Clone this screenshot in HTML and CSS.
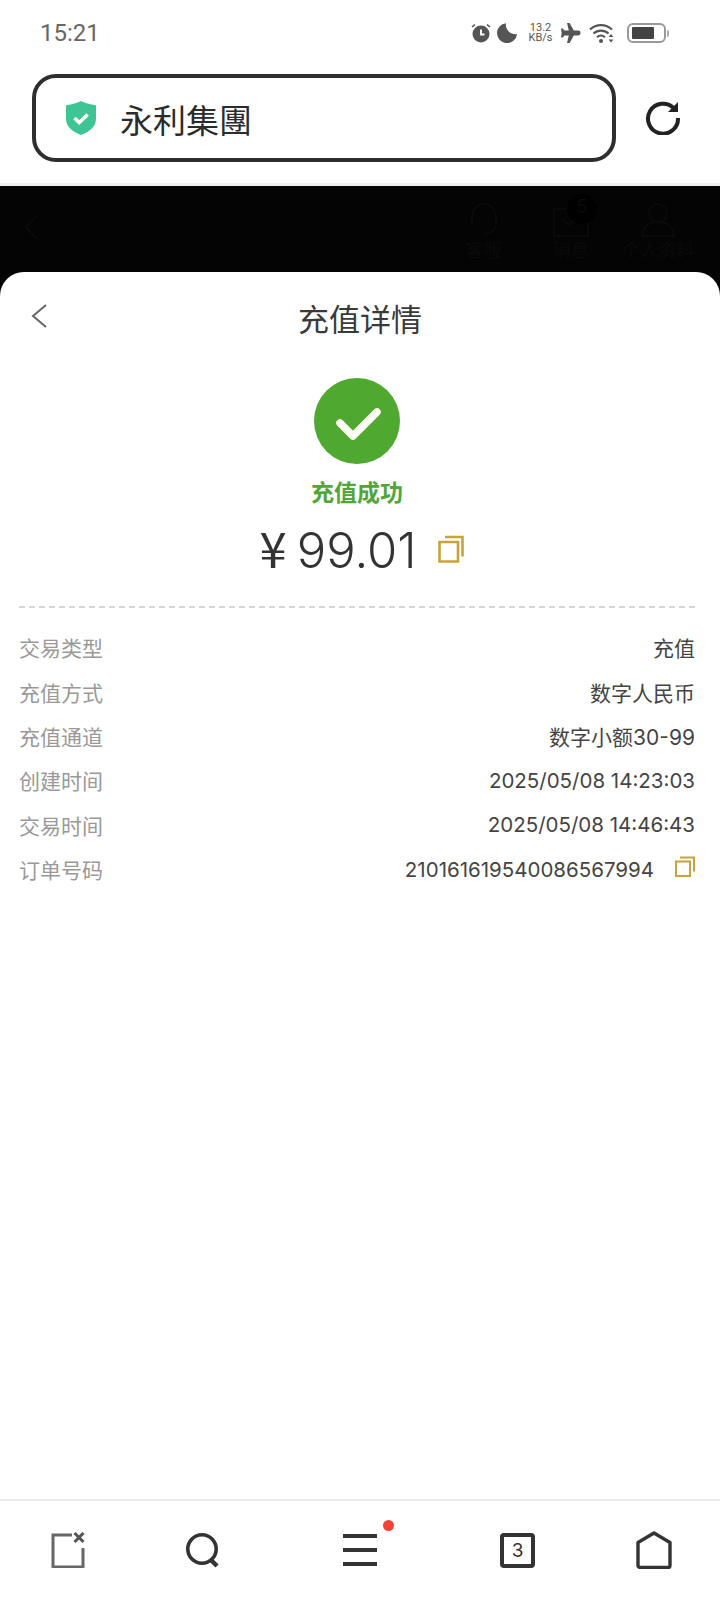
FILE: index.html

```html
<!DOCTYPE html>
<html lang="zh-CN">
<head>
  <meta charset="UTF-8" />
  <meta name="viewport" content="width=device-width, initial-scale=1.0" />
  <title>充值详情</title>
  <link rel="stylesheet" href="styles.css">
</head>
<body>
  <div class="page">
    <div class="status-bar">
      <span class="clock">15:21</span>
      <div class="status-icons">
        <svg class="ic-alarm" width="20" height="20" viewBox="0 0 20 20">
          <circle cx="10" cy="11" r="8.5" fill="#555"/>
          <path d="M10 6.500v5h3.500" fill="none" stroke="#fff" stroke-width="2"/>
          <path d="M1 4l3-2.400M19 4l-3-2.400" stroke="#555" stroke-width="1.600"/>
        </svg>
        <svg class="ic-moon" width="21" height="20" viewBox="0 0 21 20">
          <path d="M9 .2A10 10 0 1 0 20 11A9.500 9.500 0 0 1 9 .2z" fill="#555"/>
        </svg>
        <div class="speed"><span>13.2</span><span>KB/s</span></div>
        <svg class="ic-plane" width="20" height="20" viewBox="0 0 20 20">
          <path d="M6 0h2.600l4.200 7.600h4.400a2.400 2.400 0 0 1 0 4.800h-4.400L8.600 20H6l1.800-7.600H3.400L1.800 14.600H0l.7-4.600L0 5.400h1.800l1.600 2.200h4.400z" fill="#555"/>
        </svg>
        <svg class="ic-wifi" width="25" height="20" viewBox="0 0 25 20">
          <path d="M1 6.500a16 16 0 0 1 22 0M4.500 10.500a11 11 0 0 1 15 0M8 14.200a6 6 0 0 1 8 0" fill="none" stroke="#555" stroke-width="2.200"/>
          <circle cx="12" cy="18" r="2" fill="#555"/>
          <path d="M22 11l-2.400 3h4.800zM22 19.500l-2.400-3h4.800z" fill="#555"/>
        </svg>
        <div class="battery">
          <div class="battery-body"><div class="battery-level"></div></div>
          <div class="battery-tip"></div>
        </div>
      </div>
    </div>

    <div class="address-row">
      <div class="address-box">
        <svg width="30" height="34" viewBox="0 0 30 34">
          <path d="M15 0c4 2.200 9 3.300 14 4a1 1 0 0 1 1 1v13c0 8-7 12.800-15 16c-8-3.200-15-8-15-16V5a1 1 0 0 1 1-1c5-.7 10-1.800 14-4z" fill="#3fc495"/>
          <path d="M8.500 17l4.700 4.500l8.500-8" fill="none" stroke="#fff" stroke-width="3.500"/>
        </svg>
        <span class="site-name">永利集團</span>
      </div>
      <svg class="reload" width="36" height="36" viewBox="0 0 36 36">
        <path d="M29 9.500A15 15 0 1 0 33 19" fill="none" stroke="#222" stroke-width="4"/>
        <path d="M33 3v10H23z" fill="#222"/>
      </svg>
    </div>
    <div class="address-line"></div>

    <div class="dark-strip">
      <svg class="ghost-back" width="14" height="26" viewBox="0 0 14 26">
        <path d="M13 1L2 13l11 12" fill="none" stroke="#0a0a0a" stroke-width="2"/>
      </svg>
      <div class="ghost-tabs">
        <div class="ghost-tab">
          <svg width="36" height="36" viewBox="0 0 36 36">
            <path d="M6 22V15a12 13 0 0 1 24 0v7M30 22c0 6-6 10-12 10" fill="none" stroke="#0a0a0a" stroke-width="2"/>
          </svg>
          <span>客服</span>
        </div>
        <div class="ghost-tab ghost-msg">
          <svg width="36" height="36" viewBox="0 0 36 36">
            <path d="M1 7h34v27H1zM9 17l7 6l10-10" fill="none" stroke="#0a0a0a" stroke-width="2"/>
          </svg>
          <span>消息</span>
          <div class="ghost-badge">5</div>
        </div>
        <div class="ghost-tab">
          <svg width="36" height="36" viewBox="0 0 36 36">
            <circle cx="18" cy="11" r="9" fill="none" stroke="#0a0a0a" stroke-width="2"/>
            <path d="M2 34c0-9 7-14 16-14s16 5 16 14z" fill="none" stroke="#0a0a0a" stroke-width="2"/>
          </svg>
          <span>个人资料</span>
        </div>
      </div>
    </div>

    <div class="sheet">
      <div class="sheet-head">
        <svg class="back" width="16" height="24" viewBox="0 0 16 24">
          <path d="M15 1L2 12l13 11" fill="none" stroke="#666" stroke-width="2"/>
        </svg>
        <h2 class="sheet-title">充值详情</h2>
      </div>

      <div class="result">
        <svg width="86" height="86" viewBox="0 0 86 86">
          <circle cx="43" cy="43" r="43" fill="#4fa82f"/>
          <path d="M26 45l13 13l24-24" fill="none" stroke="#fdfdf5" stroke-width="7.500" stroke-linecap="round" stroke-linejoin="round"/>
        </svg>
        <div class="result-text">充值成功</div>
        <div class="amount-row">
          <span class="amount"><span class="amount-sign">¥</span>99.01</span>
          <svg class="copy-big" width="26" height="28" viewBox="0 0 26 28">
            <path d="M1.500 7h18.500v19.500H1.500zM7 2h17.500v19.500" fill="none" stroke="#c9a23c" stroke-width="2.600"/>
          </svg>
        </div>
      </div>

      <div class="divider"></div>

      <div class="rows">
        <div class="row"><span class="row-label">交易类型</span><span class="row-value">充值</span></div>
        <div class="row"><span class="row-label">充值方式</span><span class="row-value">数字人民币</span></div>
        <div class="row"><span class="row-label">充值通道</span><span class="row-value">数字小额30-99</span></div>
        <div class="row"><span class="row-label">创建时间</span><span class="row-value row-num">2025/05/08 14:23:03</span></div>
        <div class="row"><span class="row-label">交易时间</span><span class="row-value row-num">2025/05/08 14:46:43</span></div>
        <div class="row">
          <span class="row-label">订单号码</span>
          <span class="row-value row-num">
            210161619540086567994
            <svg class="copy-small" width="20" height="21" viewBox="0 0 20 21">
              <path d="M1 5.500h14v14.500H1zM5 1.500h14v14" fill="none" stroke="#c9a23c" stroke-width="2"/>
            </svg>
          </span>
        </div>
      </div>
    </div>

    <div class="bottom-bar">
      <svg width="34" height="36" viewBox="0 0 34 36">
        <path d="M21 3H2v32h30V16" fill="none" stroke="#666" stroke-width="3"/>
        <path d="M23.500 1l9 9M32.500 1l-9 9" stroke="#555" stroke-width="3"/>
      </svg>
      <svg width="34" height="36" viewBox="0 0 34 36">
        <circle cx="16" cy="17" r="14.200" fill="none" stroke="#333" stroke-width="3.600"/>
        <path d="M24 27l7 7" stroke="#333" stroke-width="4.500"/>
      </svg>
      <div class="menu">
        <div class="menu-line"></div>
        <div class="menu-line"></div>
        <div class="menu-line"></div>
        <div class="menu-dot"></div>
      </div>
      <div class="tabs-count">3</div>
      <svg width="36" height="38" viewBox="0 0 36 38">
        <path d="M18 2L34 11.500V34.500a2 2 0 0 1-2 2H4a2 2 0 0 1-2-2V11.500z" fill="none" stroke="#333" stroke-width="3.400" stroke-linejoin="round"/>
      </svg>
    </div>
  </div>
</body>
</html>
```

FILE: styles.css

```css
* {
  box-sizing: border-box;
}
body {
  margin: 0;
  background: #fff;
  font-family: Inter, "Noto Sans CJK SC", sans-serif;
}
.page {
  width: 720px;
  height: 1600px;
  display: flex;
  flex-direction: column;
}

/* status bar */
.status-bar {
  height: 66px;
  padding: 0 51px 0 40px;
  display: flex;
  align-items: center;
  justify-content: space-between;
  flex-shrink: 0;
}
.clock {
  font-family: Roboto, sans-serif;
  font-size: 24px;
  color: #666;
}
.status-icons {
  display: flex;
  align-items: center;
}
.ic-moon {
  margin-left: 6px;
}
.speed {
  margin-left: 10px;
  width: 25px;
  display: flex;
  flex-direction: column;
  align-items: center;
  font-family: Roboto, sans-serif;
  font-size: 11px;
  line-height: 10px;
  color: #555;
}
.ic-plane {
  margin-left: 8px;
}
.ic-wifi {
  margin-left: 8px;
}
.battery {
  margin-left: 13px;
  display: flex;
  align-items: center;
}
.battery-body {
  width: 39px;
  height: 20px;
  border: 2px solid #999;
  border-radius: 6px;
  padding: 2px 3px;
}
.battery-level {
  width: 22px;
  height: 100%;
  background: #444;
  border-radius: 1px;
}
.battery-tip {
  width: 2px;
  height: 7px;
  margin-left: 1px;
  background: #aaa;
  border-radius: 0 2px 2px 0;
}

/* address bar */
.address-row {
  height: 117px;
  padding: 8px 0 0 32px;
  display: flex;
  align-items: flex-start;
  flex-shrink: 0;
}
.address-box {
  width: 584px;
  height: 88px;
  border: 4px solid #2e2e2e;
  border-radius: 24px;
  padding-left: 30px;
  display: flex;
  align-items: center;
  gap: 24px;
}
.site-name {
  padding-top: 2px;
  font-size: 33px;
  color: #2b2b2b;
}
.reload {
  margin: 25px 0 0 29px;
}
.address-line {
  height: 3px;
  background: #f1f1f1;
  flex-shrink: 0;
}

/* page behind the sheet, barely visible */
.dark-strip {
  height: 110px;
  background: #040404;
  padding: 16px 26px 0 24px;
  display: flex;
  justify-content: space-between;
  flex-shrink: 0;
}
.ghost-back {
  margin-top: 12px;
}
.ghost-tabs {
  display: flex;
  gap: 33px;
}
.ghost-tab {
  position: relative;
  display: flex;
  flex-direction: column;
  align-items: center;
  font-size: 18px;
  line-height: 26px;
  color: #0a0a0a;
}
.ghost-msg {
  margin-left: 18px;
}
.ghost-badge {
  position: absolute;
  top: -8px;
  right: -8px;
  width: 30px;
  height: 30px;
  border-radius: 50%;
  background: #000;
  text-align: center;
  color: #0c0c0c;
}

/* sheet */
.sheet {
  flex: 1;
  margin-top: -24px;
  position: relative;
  background: #fff;
  border-radius: 24px 24px 0 0;
  padding: 0 25px 0 19px;
  display: flex;
  flex-direction: column;
}
.sheet-head {
  position: relative;
  height: 96px;
  padding: 25px 0 0 0;
}
.sheet-title {
  margin: 0;
  padding-left: 6px;
  text-align: center;
  font-size: 31px;
  line-height: 46px;
  font-weight: 400;
  color: #3a3a3a;
}
.back {
  position: absolute;
  left: 12px;
  top: 32px;
}
.result {
  margin-top: 10px;
  display: flex;
  flex-direction: column;
  align-items: center;
}
.result-text {
  margin-top: 13px;
  font-size: 23px;
  line-height: 32px;
  font-weight: 700;
  color: #52a538;
}
.amount-row {
  margin: 9px 0 0 9px;
  display: flex;
  align-items: center;
  height: 64px;
}
.amount {
  margin-top: -3px;
  font-size: 49px;
  line-height: 64px;
  font-weight: 300;
  color: #333;
}
.amount-sign {
  margin-right: 10px;
  font-family: "Noto Sans CJK SC", sans-serif;
  font-weight: 400;
}
.copy-big {
  margin: -3px 0 0 21px;
}
.divider {
  margin-top: 24px;
  border-top: 2px dashed #d6d6d6;
}
.rows {
  margin-top: 17px;
}
.row {
  height: 44.4px;
  display: flex;
  align-items: center;
  justify-content: space-between;
  font-size: 21px;
}
.row-label {
  color: #999;
}
.row-value {
  color: #444;
  display: flex;
  align-items: center;
}
.row-num {
  font-size: 20.5px;
}
.copy-small {
  margin-left: 21px;
  margin-top: -6px;
}

/* bottom bar */
.bottom-bar {
  height: 101px;
  border-top: 2px solid #ececec;
  padding: 0 0 1px 51px;
  display: flex;
  align-items: center;
  gap: 101px;
  flex-shrink: 0;
}
.menu {
  position: relative;
  width: 34px;
  height: 32px;
  margin: 0 22px;
  display: flex;
  flex-direction: column;
  justify-content: space-between;
}
.menu-line {
  height: 4px;
  background: #333;
}
.menu-dot {
  position: absolute;
  top: -14px;
  right: -17px;
  width: 11px;
  height: 11px;
  border-radius: 50%;
  background: #f44336;
}
.tabs-count {
  width: 35px;
  height: 35px;
  border: 4px solid #333;
  border-radius: 4px;
  display: flex;
  align-items: center;
  justify-content: center;
  font-size: 19px;
  color: #333;
}
```
